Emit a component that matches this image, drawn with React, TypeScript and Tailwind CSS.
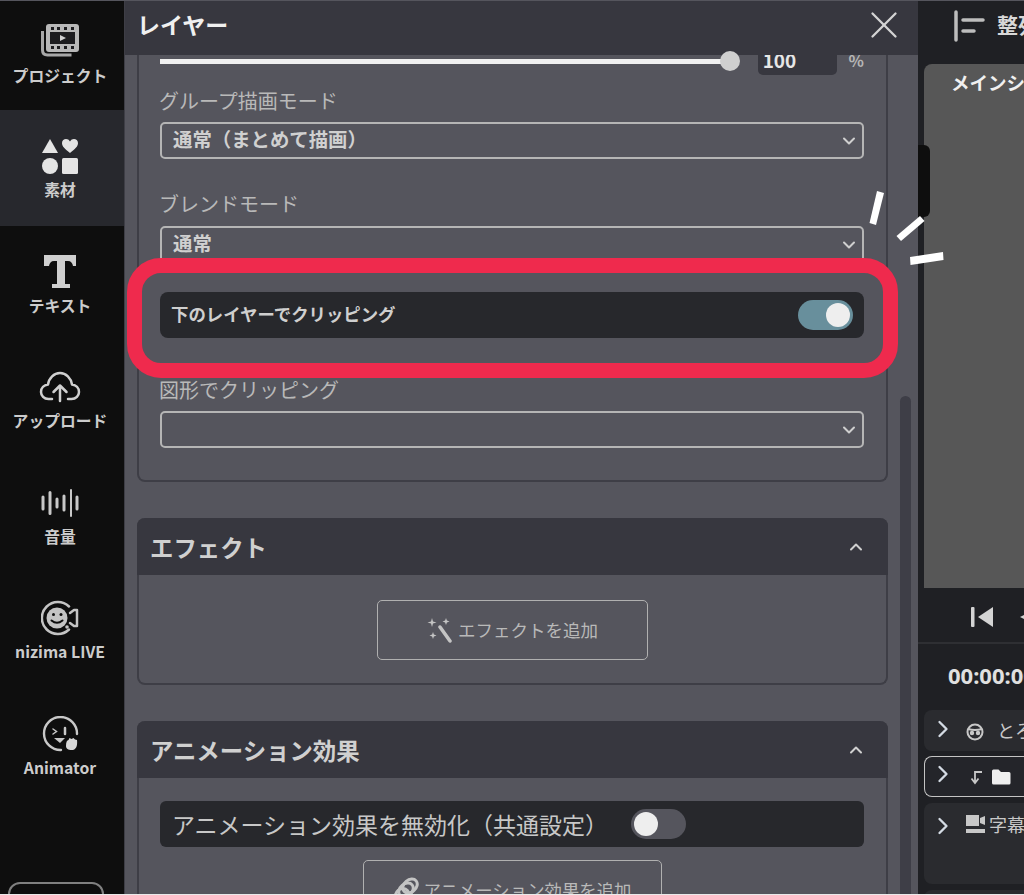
import { ReactNode } from "react";
import { ChevronDown, ChevronRight, ChevronUp, X } from "lucide-react";

const FONT = "font-['Noto_Sans_CJK_JP','Noto_Sans',sans-serif]";

const FilmIcon = () => (
  <svg width="40" height="34" viewBox="0 0 40 34" fill="none">
    <path d="M2.500 8v19q0 5 5 5h24" stroke="#a8a8a8" strokeWidth="3" />
    <rect x="6" y="1" width="33" height="28" rx="3" fill="#b8b8b8" />
    <rect x="10" y="9" width="25" height="12" fill="#1c1c1f" />
    <path d="M20 12l6 3-6 3z" fill="#d0d0d0" />
    {[11, 17, 24, 31].map((x) => (
      <g key={x} fill="#1c1c1f">
        <rect x={x} y="4" width="3" height="3" />
        <rect x={x} y="23" width="3" height="3" />
      </g>
    ))}
  </svg>
);

const ShapesIcon = () => (
  <svg width="38" height="38" viewBox="0 0 38 38" fill="#e4e4e4">
    <path d="M1 16L9 2l8 14z" />
    <path d="M29 16c-5-4-8-6.500-8-10 0-4.500 6-5.500 8-1.500 2-4 8-3 8 1.500 0 3.500-3 6-8 10z" />
    <circle cx="9" cy="29" r="8" />
    <rect x="21" y="21" width="16" height="16" rx="1.500" />
  </svg>
);

const TextIcon = () => (
  <svg width="36" height="36" viewBox="0 0 36 36" fill="#cfcfcf">
    <path d="M2 1h32v11h-3c-.5-3-2-5-5-5h-3v23h5v4H10v-4h5V7h-3c-3 0-4.500 2-5 5H2z" />
  </svg>
);

const CloudIcon = () => (
  <svg width="42" height="32" viewBox="0 0 42 32" fill="none" stroke="#d0d0d0" strokeWidth="2.500" strokeLinecap="round" strokeLinejoin="round">
    <path d="M13 28H9.500C5 28 2 24.500 2 21c0-4 3-7 7-7.500C10 7 15 2 21 2s11 5 12 11.500c4 .5 7 3.500 7 7.500 0 3.500-3 7-7.500 7H29" />
    <path d="M21 30V15M14.500 21L21 14.500 27.500 21" />
  </svg>
);

const WaveIcon = () => (
  <svg width="38" height="28" viewBox="0 0 38 28" fill="none" stroke="#c8c8c8" strokeLinecap="round" strokeWidth="3">
    <path d="M2 8v12M9 3.500v21M16 10v8M23 7v14" />
    <path d="M30 1v26" strokeWidth="2" />
    <path d="M36 8v12" />
  </svg>
);

const NizimaIcon = () => (
  <svg width="38" height="36" viewBox="0 0 38 36" fill="none" stroke="#c4c4c4" strokeLinecap="round">
    <path d="M28 6.500A16 16 0 1 0 28 29.500" strokeWidth="2.500" />
    <circle cx="16" cy="18" r="10.500" fill="#c4c4c4" stroke="none" />
    <circle cx="12.500" cy="14.500" r="1.500" fill="#0e0e0e" stroke="none" />
    <circle cx="20" cy="14.500" r="1.500" fill="#0e0e0e" stroke="none" />
    <path d="M10.500 20.500q5.500 4.500 11 0" stroke="#0e0e0e" strokeWidth="2" />
    <path d="M29 13l4-3h3v16h-3l-4-3" strokeWidth="2.500" strokeLinejoin="round" />
    <circle cx="26" cy="27" r="1.800" fill="#c4c4c4" stroke="none" />
  </svg>
);

const AnimatorIcon = () => (
  <svg width="38" height="36" viewBox="0 0 38 36" fill="none" stroke="#c8c8c8" strokeWidth="2.400" strokeLinecap="round">
    <path d="M20 34A16.500 16.500 0 1 1 36 18" />
    <path d="M12 13l3.500 2.500L12 18" strokeWidth="1.500" />
    <path d="M24 12v6" strokeWidth="2.500" />
    <path d="M13 22h11l-5 5z" fill="#c8c8c8" stroke="none" />
    <path d="M25 30c0-4 1-6 2.500-6l1-2 2 1 2-1 1.500 1.500 2 .5c.5 4 0 9-4 10-4 .5-7-1-7-4z" fill="#d8d8d8" stroke="none" />
  </svg>
);

const navItems: { label: string; icon: ReactNode; active?: boolean; first?: boolean }[] = [
  { label: "プロジェクト", icon: <FilmIcon />, first: true },
  { label: "素材", icon: <ShapesIcon />, active: true },
  { label: "テキスト", icon: <TextIcon /> },
  { label: "アップロード", icon: <CloudIcon /> },
  { label: "音量", icon: <WaveIcon /> },
  { label: "nizima LIVE", icon: <NizimaIcon /> },
  { label: "Animator", icon: <AnimatorIcon /> },
];

const Sidebar = () => (
  <div className="relative w-[125px] shrink-0 border-r border-[#3e3e46] bg-[#0e0e0e]">
    {navItems.map((item) => (
      <div
        key={item.label}
        className={`flex flex-col items-center pr-[4px] ${item.first ? "h-[109px] pt-[20px]" : "h-[115.500px] pt-[27px]"} ${item.active ? "bg-[#27282d]" : ""}`}
      >
        <div className="flex h-[38px] items-center justify-center">{item.icon}</div>
        <div className={`${item.first ? "mt-[5px]" : "mt-[3px]"} text-[15.800px] leading-[24px] font-bold whitespace-nowrap text-[#cccccc]`}>
          {item.label}
        </div>
      </div>
    ))}
    <div className="mt-[79px] ml-[8px] h-[20px] w-[96px] rounded-t-[12px] border-2 border-[#808080]" />
  </div>
);

const Label = ({ text, className }: { text: string; className: string }) => (
  <div className={`-ml-[1px] h-[24px] text-[20px] leading-[24px] text-[#b9b9b9] ${className}`}>{text}</div>
);

const Select = ({ value, className }: { value: string; className: string }) => (
  <div className={`flex h-[37px] items-center justify-between rounded-[5px] border-2 border-[#b5b5b5] pr-[3px] pl-[11px] ${className}`}>
    <span className="-mt-[3px] text-[19.400px] leading-[24px] font-bold text-[#d0d0d0]">{value}</span>
    <ChevronDown size={20} strokeWidth={2.400} className="shrink-0 text-[#cfcfcf]" />
  </div>
);

const Toggle = ({ on, className }: { on?: boolean; className?: string }) => (
  <div className={`flex h-[30px] w-[55px] items-center rounded-full px-[3px] ${on ? "justify-end bg-[#688f9c]" : "justify-start bg-[#55555d]"} ${className ?? ""}`}>
    <div className="h-[24px] w-[24px] rounded-full bg-[#eeeeee]" />
  </div>
);

const CardHeader = ({ title }: { title: string }) => (
  <div className="flex h-[57px] items-center justify-between rounded-t-[8px] bg-[#37373f] pr-[22px] pl-[13px]">
    <span className="text-[23.400px] leading-[30px] font-bold text-[#d0d0d0]">{title}</span>
    <ChevronUp size={20} strokeWidth={2.400} className="text-[#d0d0d0]" />
  </div>
);

const WandIcon = () => (
  <svg className="shrink-0" width="26" height="26" viewBox="0 0 26 26" fill="none" stroke="#c4c4c4" strokeLinecap="round">
    <path d="M13 10l10 14" strokeWidth="3.500" />
    <g fill="#c4c4c4" stroke="none">
      <path d="M5 1l1 3.500 3.500 1-3.500 1-1 3.500-1-3.500-3.500-1 3.500-1z" />
      <path d="M19 1l.9 2.600 2.600.9-2.600.9-.9 2.600-.9-2.600-2.600-.9 2.600-.9z" />
      <path d="M6 15l.9 2.600 2.600.9-2.600.9-.9 2.600-.9-2.600-2.600-.9 2.600-.9z" />
    </g>
  </svg>
);

const ChainIcon = () => (
  <svg className="shrink-0" width="26" height="26" viewBox="0 0 26 26" fill="none" stroke="#c4c4c4" strokeWidth="3">
    <ellipse cx="16" cy="9" rx="8" ry="6" transform="rotate(-40 16 9)" />
    <ellipse cx="12" cy="13" rx="8" ry="6" transform="rotate(-40 12 13)" />
    <ellipse cx="8" cy="18" rx="7" ry="6" transform="rotate(-40 8 18)" />
  </svg>
);

const LayerPanel = () => (
  <div className="relative flex w-[793px] shrink-0 flex-col overflow-hidden bg-[#55555d]">
    <div className="flex h-[54px] shrink-0 items-center justify-between bg-[#37373f] pr-[11px] pl-[12px]">
      <span className="-mt-[8px] text-[23px] leading-[28px] font-bold text-[#f0f0f0]">レイヤー</span>
      <X size={46} strokeWidth={1.200} className="-mt-[6px] text-[#d4d4d4]" />
    </div>

    <div className="ml-[12px] w-[751px]">
      <div className="rounded-b-[8px] border-x-2 border-b-2 border-[#3e3e46] pr-[22px] pb-[32px] pl-[21px]">
        <div className="flex h-[20px] items-start">
          <div className="mt-[4px] h-[5px] w-[570px] bg-[#f0f0f0]" />
          <div className="-mt-[4px] -ml-[10px] h-[20px] w-[20px] rounded-full bg-[#cfcfcf]" />
          <div className="ml-[18px] flex h-[20px] w-[79px] items-start overflow-hidden rounded-b-[5px] bg-[#37373f] pl-[5px]">
            <span className="-mt-[7px] text-[19px] leading-[24px] font-bold text-[#e6e6e6]">100</span>
          </div>
          <span className="-mt-[2px] ml-[12px] text-[16px] leading-[14px] font-bold text-[#b5b5b5]">%</span>
        </div>

        <Label text="グループ描画モード" className="mt-[14px]" />
        <Select value="通常（まとめて描画）" className="mt-[9px]" />
        <Label text="ブレンドモード" className="mt-[33px]" />
        <Select value="通常" className="mt-[10px]" />

        <div className="mt-[29px] flex h-[46px] items-center justify-between rounded-[8px] bg-[#27282c] px-[11px]">
          <span className="-mt-[2px] text-[17.400px] leading-[24px] font-bold text-[#cfcfcf]">下のレイヤーでクリッピング</span>
          <Toggle on />
        </div>

        <Label text="図形でクリッピング" className="mt-[40px]" />
        <Select value="" className="mt-[9px]" />
      </div>

      <div className="mt-[36px] h-[167px] rounded-[8px] border-x-2 border-b-2 border-[#3e3e46]">
        <div className="-mx-[2px]">
          <CardHeader title="エフェクト" />
        </div>
        <div className="mx-auto mt-[25px] flex h-[60px] w-[271px] items-center justify-center gap-[5px] rounded-[5px] border border-[#b0b0b0]">
          <WandIcon />
          <span className="text-[17.500px] text-[#b9b9b9]">エフェクトを追加</span>
        </div>
      </div>

      <div className="mt-[36px] rounded-t-[8px] border-x-2 border-[#3e3e46]">
        <div className="-mx-[2px]">
          <CardHeader title="アニメーション効果" />
        </div>
        <div className="mt-[23px] mr-[22px] ml-[21px] flex h-[46px] items-center rounded-[6px] bg-[#27282c] pl-[12px]">
          <span className="text-[23px] leading-[30px] text-[#c8c8c8]">アニメーション効果を無効化（共通設定）</span>
          <Toggle className="ml-[23px]" />
        </div>
        <div className="mx-auto mt-[13px] flex h-[60px] w-[299px] items-start justify-center gap-[4px] rounded-t-[5px] border border-[#b0b0b0] pt-[16px]">
          <ChainIcon />
          <span className="text-[17.400px] leading-[26px] text-[#b9b9b9]">アニメーション効果を追加</span>
        </div>
      </div>
    </div>

    {/* scrollbar */}
    <div className="absolute top-[395px] right-[7px] h-[520px] w-[11px] rounded-full bg-[#3e3e47]" />
  </div>
);

const FolderIcon = () => (
  <svg className="shrink-0" width="20" height="16" viewBox="0 0 20 16" fill="#efefef">
    <path d="M1 2q0-1.500 1.500-1.500h5L10 3h8q1.500 0 1.500 1.500V14q0 1.500-1.500 1.500H2.500Q1 15.500 1 14z" />
  </svg>
);

const RowChevron = ({ className }: { className: string }) => (
  <ChevronRight size={28} strokeWidth={2} className={`shrink-0 text-[#d4dbe4] ${className}`} />
);

const RightPanel = () => (
  <div className="flex min-w-0 flex-1 flex-col overflow-hidden bg-[#1f2024]">
    <div className="flex h-[54px] shrink-0 items-center pl-[36px]">
      <svg className="-mt-[4px] shrink-0" width="32" height="32" viewBox="0 0 32 32" fill="none" stroke="#bdbdbd" strokeWidth="3.500" strokeLinecap="round">
        <path d="M2 2v28" />
        <path d="M9 10h20M9 21h11" />
      </svg>
      <span className="-mt-[8px] ml-[11px] text-[21px] leading-[28px] font-bold whitespace-nowrap text-[#d8d8d8]">整列</span>
    </div>
    <div className="mt-[9px] ml-[6px] h-[524px] shrink-0 rounded-tl-[8px] bg-[#575757] pt-[4px] pl-[27px]">
      <span className="text-[18.500px] leading-[28px] font-bold whitespace-nowrap text-[#f0f0f0]">メインシーン</span>
    </div>
    <div className="mt-[4px] flex h-[52px] shrink-0 items-center border-b-2 border-[#2e2f33] pl-[53px]">
      <svg className="shrink-0" width="23" height="22" viewBox="0 0 23 22" fill="#d4d4d4">
        <rect x="0" y="1" width="3.500" height="20" rx="1" />
        <path d="M22 1v20L7 11z" />
      </svg>
      <svg className="ml-[26px] shrink-0" width="6" height="6" viewBox="0 0 6 6" fill="#d4d4d4">
        <path d="M6 0v6L0 3z" />
      </svg>
    </div>
    <div className="flex h-[62px] shrink-0 items-center pl-[30px]">
      <span className="font-['Noto_Sans',sans-serif] text-[22px] font-bold whitespace-nowrap text-[#e0e0e0]">00:00:00</span>
    </div>
    <div className="mt-[4px] ml-[6px] flex h-[41px] shrink-0 items-center rounded-l-[8px] bg-[#2a2b2f] pl-[5px]">
      <RowChevron className="-mt-[3px]" />
      <svg className="ml-[8px] shrink-0" width="20" height="20" viewBox="0 0 20 20" fill="none" stroke="#c8c8c8" strokeWidth="2">
        <circle cx="10" cy="11" r="7.500" />
        <path d="M3 8q7 2 14 0" />
        <circle cx="7" cy="12" r="1.200" fill="#c8c8c8" />
        <circle cx="13" cy="12" r="1.200" fill="#c8c8c8" />
      </svg>
      <span className="ml-[12px] text-[18px] whitespace-nowrap text-[#c8c8c8]">とろ</span>
    </div>
    <div className="mt-[5px] ml-[6px] flex h-[41px] shrink-0 items-center rounded-l-[8px] border border-r-0 border-[#c4c4c4] bg-[#24252a] pl-[4px]">
      <RowChevron className="-mt-[6px]" />
      <svg className="ml-[12px] shrink-0" width="14" height="16" viewBox="0 0 14 16" fill="none" stroke="#c8c8c8" strokeWidth="1.800">
        <path d="M13 3H6v10M2.500 9.500L6 14l3.500-4.500" />
      </svg>
      <div className="ml-[8px]">
        <FolderIcon />
      </div>
    </div>
    <div className="mt-[6px] ml-[6px] flex h-[81px] shrink-0 items-start rounded-l-[8px] bg-[#2a2b2f] pt-[9px] pl-[5px]">
      <RowChevron className="" />
      <svg className="mt-[2px] ml-[8px] shrink-0" width="21" height="20" viewBox="0 0 21 20" fill="#c8c8c8">
        <path d="M1 1h13v11H1zM15 4l5-2v9l-5-2z" />
        <rect x="1" y="15" width="19" height="4" />
      </svg>
      <span className="ml-[3px] text-[18px] leading-[24px] whitespace-nowrap text-[#c8c8c8]">字幕</span>
    </div>
    <div className="mt-[6px] ml-[6px] h-[10px] shrink-0 rounded-tl-[8px] bg-[#2a2b2f]" />
  </div>
);

export default function App() {
  return (
    <div className={`relative h-[895px] w-[1024px] overflow-hidden bg-[#e9e9e9] ${FONT}`}>
      <div className="flex h-[894px] overflow-hidden border-t border-[#55555d]">
        <Sidebar />
        <LayerPanel />
        <RightPanel />
      </div>

      {/* callout overlays */}
      <div className="absolute top-[145px] left-[918px] h-[72px] w-[12px] rounded-r-[6px] bg-[#0e0e0e]" />
      <div className="absolute top-[258px] left-[127px] h-[120px] w-[771px] rounded-[34px] border-[15.500px] border-[#ef2a4d]" />
      <svg className="absolute top-[185px] left-[865px]" width="85" height="90" viewBox="0 0 85 90" fill="#ffffff">
        <path d="M12 6l7 2-8 32-6.500-2z" />
        <path d="M55 31l4.500 5L36 56l-4.500-5z" />
        <path d="M45 72l33-5 .5 8-33 5z" />
      </svg>
    </div>
  );
}
